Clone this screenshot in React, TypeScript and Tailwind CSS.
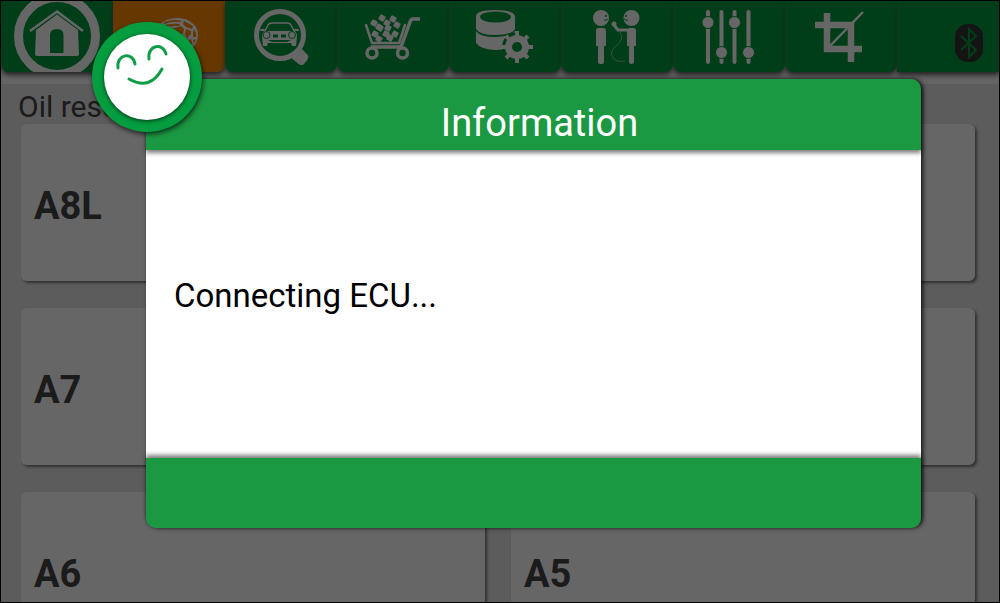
import type { ReactNode } from "react"

const cars = ["A8L", "A8", "A7", "A6L", "A6", "A5"]

function HomeIcon() {
  return (
    <svg viewBox="1 1 112 71" className="h-[71px] w-28" fill="none">
      <circle cx="57" cy="36" r="38.5" stroke="#fff" strokeWidth="9" />
      <path d="M30 31 57 11.500 83 31" stroke="#fff" strokeWidth="2.500" />
      <path
        d="M57 14.500 78 30 79 54Q79 56 77 56H37Q35 56 35 54L36 30ZM50 53H63.500V35Q63.500 29 57 29 50 29 50 35Z"
        fill="#fff"
        fillRule="evenodd"
      />
    </svg>
  )
}

function GlobeIcon() {
  return (
    <svg viewBox="113 1 112 71" className="h-[71px] w-28">
      <path
        d="M158 25Q168 17 180 18 191 20 196 27 200 35 196 43 192 51 182 54L160 54 155 30Z"
        fill="#fff"
      />
      <g fill="#ff8c00">
        <path d="M164 22Q173 19 180 20.500L182 22Q171 21 164 24Z" />
        <path d="M162 26Q172 23 180 24L179 26Q170 25 161 28Z" />
        <path d="M184 21 193 26 192 29 186 27 183 24Z" />
        <path d="M172 29 181 26 184 29 183 34 176 36 168 33Z" />
        <path d="M186 29 191 31 191 34 187 38 185 34Z" />
        <path d="M194 29Q197 34 196 37L193 37 193 32Z" />
        <path d="M188 41 191 39 192 43 190 47 188 46Z" />
        <path d="M193 40 196 39 194 44Z" />
      </g>
    </svg>
  )
}

function CarSearchIcon() {
  return (
    <svg viewBox="225 1 112 71" className="h-[71px] w-28" fill="none" stroke="#fff">
      <circle cx="280" cy="35" r="23.500" strokeWidth="5" />
      <path d="M295 56 302 49.500 308 56Q308 60 303 64.500 300 65 298 63L292 58Z" fill="#fff" strokeWidth="1" />
      <path d="M265 31 268 25Q269 23 272 23H287Q290 23 291 25L294 31" strokeWidth="1.500" />
      <path
        d="M264 31H295Q297 33 297 37L296 46H292L291 43H268L267 46H263L262 37Q262 33 264 31ZM273 34.500V37.500H278V34.500ZM281 34.500V37.500H286V34.500ZM268 40 272 42H287L291 40Z"
        fill="#fff"
        fillRule="evenodd"
        stroke="none"
      />
      <g fill="#fff" stroke="#009c40" strokeWidth="1">
        <circle cx="266.500" cy="35" r="3.500" />
        <circle cx="292" cy="35" r="3.500" />
      </g>
      <path d="M261 30H264M295 30H298" strokeWidth="2" strokeLinecap="round" />
    </svg>
  )
}

const goods = [
  [374, 23], [382, 18], [379, 27], [387, 23], [393, 19], [397, 25],
  [375, 34], [380, 28], [388, 28], [386, 34], [395, 34], [379, 39], [390, 38],
]

function CartIcon() {
  return (
    <svg viewBox="337 1 112 71" className="h-[71px] w-28" fill="none" stroke="#fff">
      <path d="M366 25 372 43H399L405 25" strokeWidth="2.500" strokeLinecap="round" strokeLinejoin="round" />
      <path d="M420 19H413Q411 19 410 22L401 47H371" strokeWidth="3.500" />
      <g strokeWidth="3.500">
        <circle cx="372" cy="53" r="5" />
        <circle cx="402.500" cy="53" r="5" />
      </g>
      {goods.map(([x, y]) => (
        <rect
          key={`${x}-${y}`}
          x={x - 3}
          y={y - 3}
          width="6"
          height="6"
          rx="1"
          fill="#fff"
          stroke="none"
          transform={`rotate(30 ${x} ${y})`}
        />
      ))}
    </svg>
  )
}

function DatabaseIcon() {
  return (
    <svg viewBox="449 1 112 71" className="h-[71px] w-28">
      <path d="M476 31Q480 37 495 37 510 37 515 31V46Q508 50 495 50 480 49 476 43Z" fill="#fff" />
      <path d="M476 16Q477 10 495 10 513 10 515 16V29Q511 35 495 35 480 35 476 29Z" fill="#fff" />
      <ellipse cx="495.500" cy="17" rx="15.500" ry="5.500" fill="#009c40" />
      <circle cx="517" cy="47" r="15" fill="#009c40" />
      <path d="M517 31V63M501 47H533M506 36 528 58M528 36 506 58" stroke="#fff" strokeWidth="4" />
      <circle cx="517" cy="47" r="12" fill="#fff" />
      <circle cx="517" cy="47" r="5" fill="#009c40" />
    </svg>
  )
}

function SupportIcon() {
  return (
    <svg viewBox="561 1 112 71" className="h-[71px] w-28" fill="#fff">
      <circle cx="601" cy="18" r="8" />
      <circle cx="631.500" cy="18" r="8" />
      <path d="M604 20Q606 21 608 19M628 20Q626 21 624 19" fill="none" stroke="#009c40" />
      <circle cx="606" cy="16" r="1" fill="#009c40" />
      <circle cx="626" cy="16" r="1" fill="#009c40" />
      <path d="M598 28H603Q606 28 606 31V46H604V62Q604 64 601 64 598 64 598 62V46H596V31Q596 28 598 28Z" />
      <path d="M629 28H634Q636 28 636 31V46H634V62Q634 64 631.500 64 629 64 629 62V46H627V31Z" />
      <circle cx="614" cy="24" r="2.500" />
      <path d="M614 25 618 30H630" fill="none" stroke="#fff" strokeWidth="3" />
      <path d="M620 32Q625 39 616 46 610 51 612 56 615 63 625 61" fill="none" stroke="#fff" strokeWidth="0.500" />
    </svg>
  )
}

function SlidersIcon() {
  return (
    <svg viewBox="673 1 112 71" className="h-[71px] w-28" fill="#fff">
      <path d="M708 12V62M721.500 12V62M734.500 12V62M748.500 12V62" stroke="#fff" strokeWidth="4" strokeLinecap="round" />
      <g stroke="#009c40" strokeWidth="1">
        <circle cx="708" cy="22.500" r="6" />
        <circle cx="721.500" cy="52.500" r="6" />
        <circle cx="734.500" cy="22.500" r="6" />
        <circle cx="748.500" cy="52.500" r="6" />
      </g>
    </svg>
  )
}

function CropIcon() {
  return (
    <svg viewBox="785 1 112 71" className="h-[71px] w-28" fill="none" stroke="#fff">
      <path d="M827 13V49H862M815 25H851V62" strokeWidth="6.500" />
      <path d="M829 47 863 12" strokeWidth="2.500" />
    </svg>
  )
}

function BluetoothIcon() {
  return (
    <svg viewBox="0 0 28 38" className="h-[38px] w-7" fill="none">
      <rect width="28" height="38" rx="13" fill="#333" />
      <path d="M6 12 21 26 14 33V5L21 12 6 26" stroke="#009c40" strokeWidth="2" />
    </svg>
  )
}

function Tab({ label, active, children }: { label: string; active?: boolean; children: ReactNode }) {
  return (
    <button
      type="button"
      aria-label={label}
      className={`h-[71px] w-28 shrink-0 overflow-hidden rounded-b-lg shadow-[0_3px_5px_#555] ${
        active ? "bg-[#ff8c00]" : "bg-[#009c40]"
      }`}
    >
      {children}
    </button>
  )
}

function FaceBadge() {
  return (
    <div className="absolute -top-[57px] -left-[54px] z-20 size-[110px] rounded-full bg-[#059d3f] p-3 shadow-[1px_2px_5px_rgba(0,0,0,0.7)]">
      <div className="size-full rounded-full bg-white shadow-[0_1px_4px_rgba(0,0,0,0.7)]">
        <svg viewBox="104 34 86 86" fill="none" stroke="#109d47" strokeWidth="3" strokeLinecap="round">
          <path d="M118 68C116 54 133 51 135 64M149 59C147 45 163 42 166 54M129 79Q150 91 162 69" />
        </svg>
      </div>
    </div>
  )
}

export default function App() {
  return (
    <div className="relative h-screen overflow-hidden border border-black bg-[#e6e6e6] font-['Roboto',sans-serif]">
      <header className="flex h-[83px] bg-[#fafafa]">
        <nav className="flex">
          <Tab label="Home"><HomeIcon /></Tab>
          <Tab label="Diagnosis" active><GlobeIcon /></Tab>
          <Tab label="Vehicle search"><CarSearchIcon /></Tab>
          <Tab label="Shop"><CartIcon /></Tab>
          <Tab label="Data"><DatabaseIcon /></Tab>
          <Tab label="Support"><SupportIcon /></Tab>
          <Tab label="Settings"><SlidersIcon /></Tab>
          <Tab label="Crop"><CropIcon /></Tab>
        </nav>
        <div className="flex h-[71px] flex-1 items-end justify-end bg-[#009c40] pr-4 pb-2.5 shadow-[0_3px_5px_#555]">
          <BluetoothIcon />
        </div>
      </header>

      <main className="pr-6 pl-5">
        <h1 className="-ml-[3px] h-10 pt-[3px] text-[30px] leading-10 text-[#444]">Oil reset</h1>
        <div className="grid grid-cols-2 gap-x-[26px] gap-y-[27px]">
          {cars.map((car) => (
            <button
              key={car}
              type="button"
              className="h-[157px] rounded-md bg-white px-[13px] pt-2 text-left text-[38px] font-bold text-[#444] shadow-[2px_2px_3px_#777]"
            >
              {car}
            </button>
          ))}
        </div>
      </main>

      <div className="absolute inset-0 flex bg-black/60 pt-[78px] pr-[78px] pb-[74px] pl-[145px]">
        <section
          role="dialog"
          aria-labelledby="dialog-title"
          className="relative flex flex-1 flex-col rounded-[10px] shadow-[2px_0_4px_rgba(0,0,0,0.8)]"
        >
          <FaceBadge />
          <div className="z-10 h-[71px] rounded-t-[10px] bg-[#1b9842] pt-4 pl-3 text-center shadow-[0_3px_4px_rgba(0,0,0,0.5)]">
            <h2 id="dialog-title" className="text-[38px] leading-14 text-white">Information</h2>
          </div>
          <div className="flex flex-1 items-center bg-white px-7 pb-4">
            <p className="text-[33px] leading-10 text-black">Connecting ECU...</p>
          </div>
          <div className="h-[70px] rounded-b-[10px] bg-[#1b9842] shadow-[0_-3px_4px_rgba(0,0,0,0.5)]" />
        </section>
      </div>
    </div>
  )
}
